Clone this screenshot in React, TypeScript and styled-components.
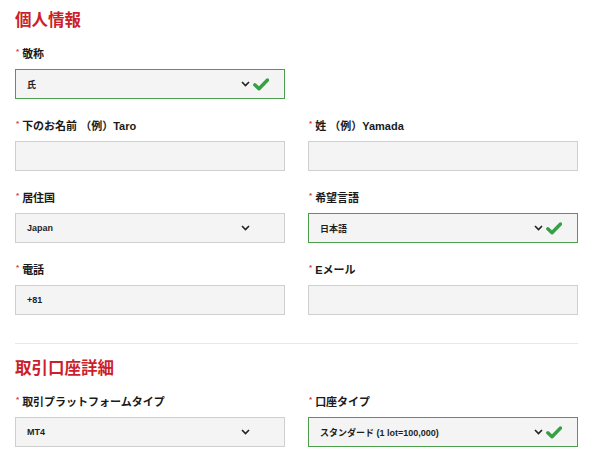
import React from 'react'
import styled, { createGlobalStyle } from 'styled-components'

const GlobalStyle = createGlobalStyle`
  body {
    margin: 0;
    background: #fff;
    font-family: "Liberation Sans", "Noto Sans CJK JP", sans-serif;
    color: #222;
  }
`

type Field =
  | { kind: 'select'; label: string; value: string; valid?: boolean }
  | { kind: 'text'; label: string; value?: string }

const personal: (Field | null)[] = [
  { kind: 'select', label: '敬称', value: '氏', valid: true },
  null,
  { kind: 'text', label: '下のお名前 （例）Taro' },
  { kind: 'text', label: '姓 （例）Yamada' },
  { kind: 'select', label: '居住国', value: 'Japan' },
  { kind: 'select', label: '希望言語', value: '日本語', valid: true },
  { kind: 'text', label: '電話', value: '+81' },
  { kind: 'text', label: 'Eメール' },
]

const account: Field[] = [
  { kind: 'select', label: '取引プラットフォームタイプ', value: 'MT4' },
  { kind: 'select', label: '口座タイプ', value: 'スタンダード (1 lot=100,000)', valid: true },
]

function Chevron() {
  return (
    <svg width="9" height="6" viewBox="0 0 9 6">
      <polyline points="1,1 4.5,4.5 8,1" fill="none" stroke="#222" strokeWidth="1.6" />
    </svg>
  )
}

function Check() {
  return (
    <svg width="16" height="13" viewBox="0 0 16 13">
      <polyline
        points="1.8,6.8 6,10.8 14.5,2"
        fill="none"
        stroke="#35a044"
        strokeWidth="3.4"
        strokeLinecap="round"
        strokeLinejoin="round"
      />
    </svg>
  )
}

function FormField({ field }: { field: Field }) {
  return (
    <FieldBlock>
      <Label>
        <Star>*</Star>
        {field.label}
      </Label>
      {field.kind === 'select' ? (
        <SelectBox $valid={field.valid}>
          <SelectValue>{field.value}</SelectValue>
          <Icons>
            <Chevron />
            <CheckSlot>{field.valid && <Check />}</CheckSlot>
          </Icons>
        </SelectBox>
      ) : (
        <TextInput type="text" defaultValue={field.value ?? ''} />
      )}
    </FieldBlock>
  )
}

function App() {
  return (
    <>
      <GlobalStyle />
      <Page>
        <Heading>個人情報</Heading>
        <Grid>
          {personal.map((f, i) => (f ? <FormField key={i} field={f} /> : <span key={i} />))}
        </Grid>
        <Divider />
        <Heading>取引口座詳細</Heading>
        <Grid>
          {account.map((f, i) => (
            <FormField key={i} field={f} />
          ))}
        </Grid>
      </Page>
    </>
  )
}

export default App

const Page = styled.div`
  width: 563px;
  padding: 8px 0 0 15px;
`

const Heading = styled.h2`
  margin: 0 0 13px;
  font-size: 16.5px;
  line-height: 24px;
  font-weight: 700;
  color: #cc1f2b;
`

const Grid = styled.div`
  display: grid;
  grid-template-columns: 270px 270px;
  column-gap: 23px;
  row-gap: 18px;
`

const FieldBlock = styled.div`
  display: flex;
  flex-direction: column;
`

const Label = styled.label`
  display: flex;
  align-items: center;
  height: 16px;
  margin-bottom: 8px;
  font-size: 11px;
  font-weight: 700;
  color: #1a1a1a;
`

const Star = styled.span`
  margin: -4px 3px 0 1px;
  font-size: 8px;
  color: #d23b3b;
`

const SelectBox = styled.div<{ $valid?: boolean }>`
  box-sizing: border-box;
  display: flex;
  align-items: center;
  justify-content: space-between;
  height: 30px;
  padding: 0 15px 0 11px;
  background: #f4f4f4;
  border: 1px solid ${({ $valid }) => ($valid ? '#4a9e4c' : '#cfcfcf')};
`

const SelectValue = styled.span`
  font-size: 9px;
  font-weight: 700;
  color: #1e1e1e;
`

const Icons = styled.div`
  display: flex;
  align-items: center;
  gap: 3px;
`

const CheckSlot = styled.span`
  display: flex;
  width: 16px;
  justify-content: center;
`

const TextInput = styled.input`
  box-sizing: border-box;
  height: 30px;
  width: 100%;
  margin: 0;
  padding: 0 11px;
  background: #f4f4f4;
  border: 1px solid #cfcfcf;
  border-radius: 0;
  font-family: "Liberation Sans", "Noto Sans CJK JP", sans-serif;
  font-size: 9px;
  font-weight: 700;
  color: #1e1e1e;
  outline: none;
`

const Divider = styled.hr`
  margin: 28px 0 12px;
  border: 0;
  border-top: 1px solid #e8e8e8;
  height: 0;
`
